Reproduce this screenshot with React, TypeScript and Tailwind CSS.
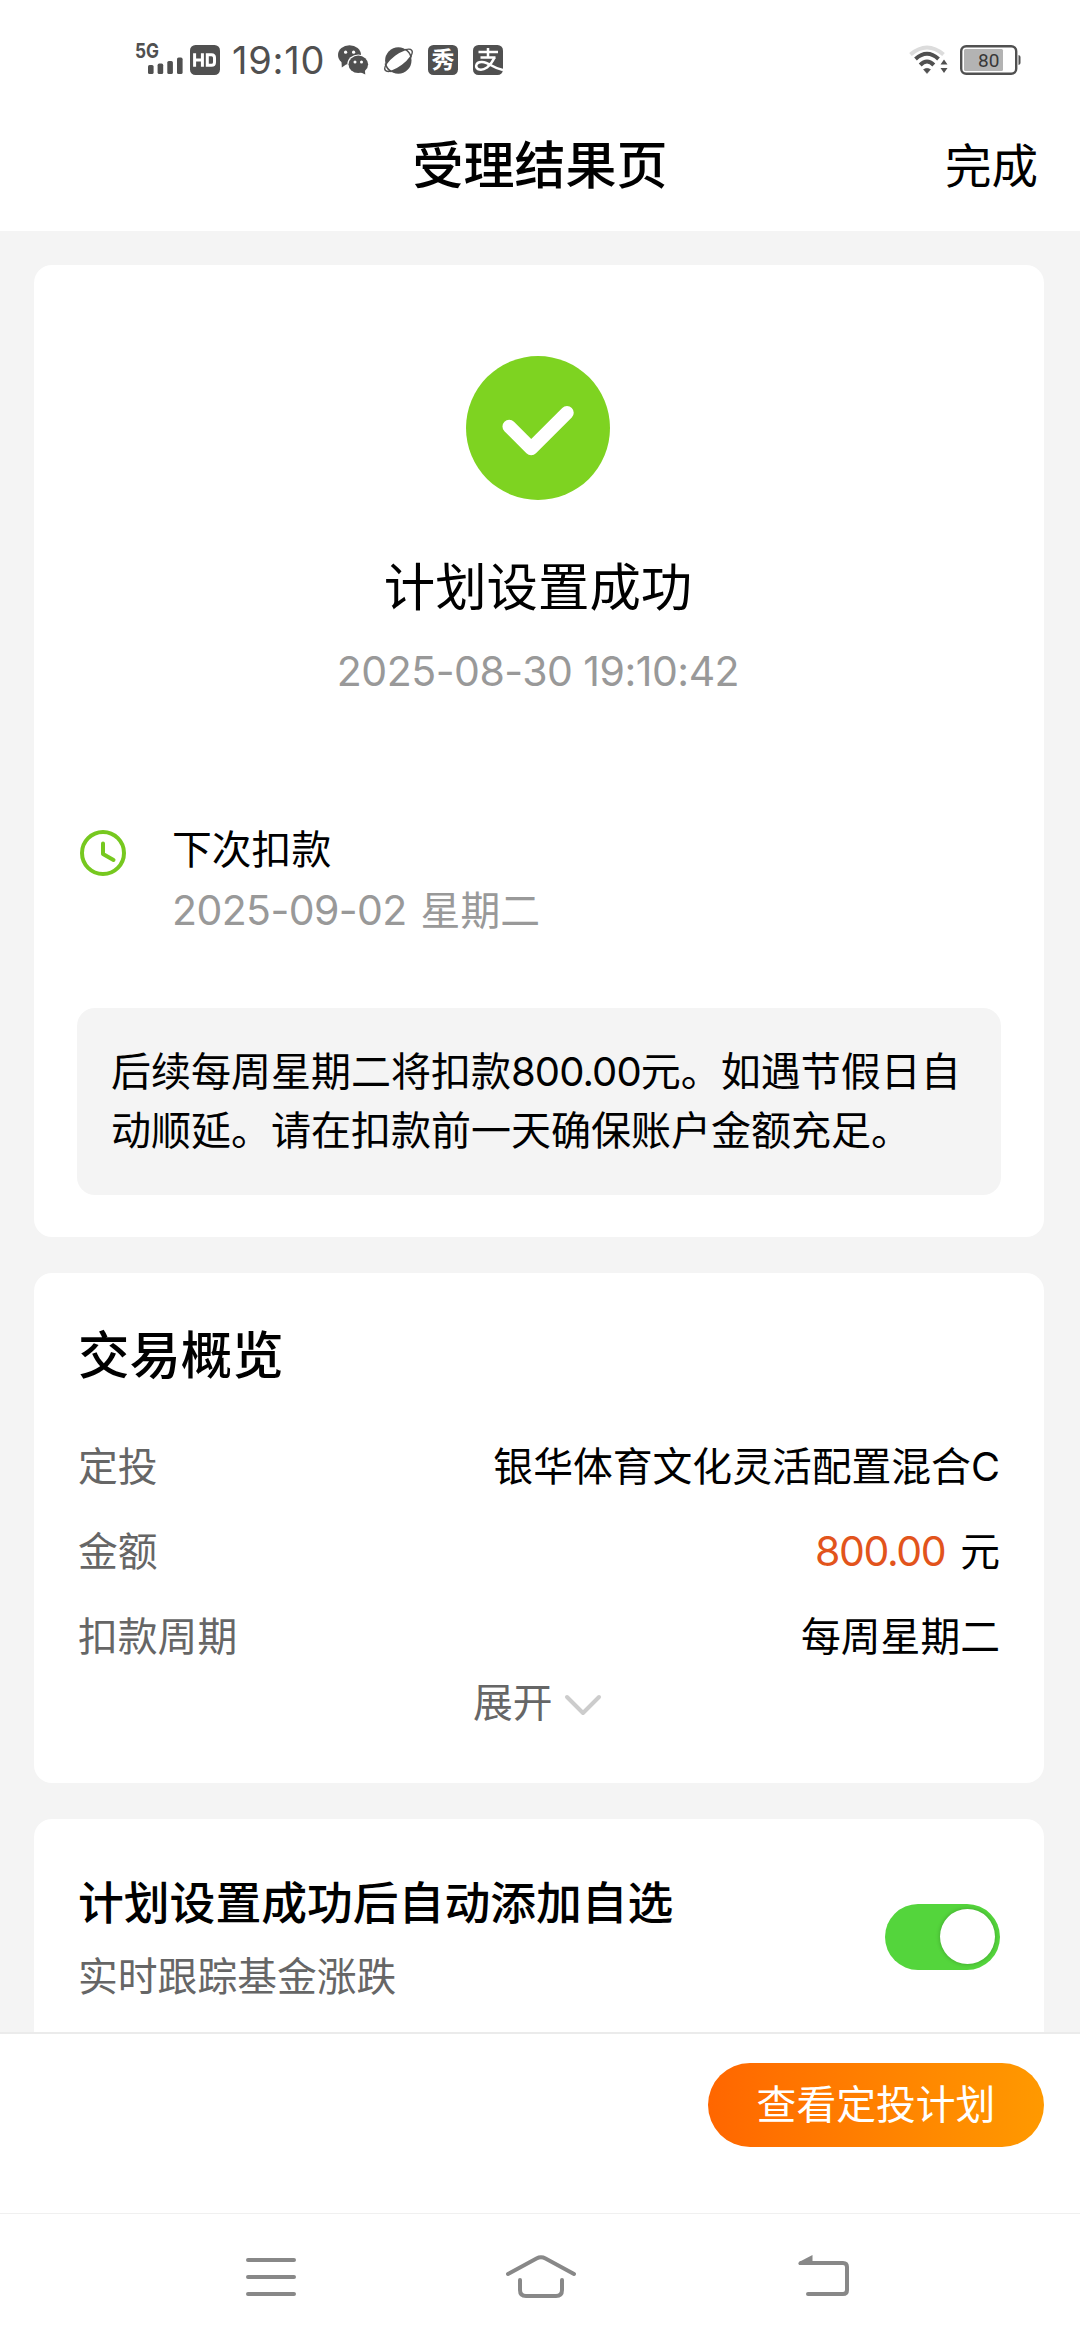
function StatusBar() {
  return (
    <div className="flex h-[120px] items-center pl-[135px] pr-[59px] text-[#505050]">
      <svg className="h-[40px] w-[50px]" viewBox="0 0 50 40" fill="currentColor">
        <text x="0" y="18" fontSize="20" fontWeight="700" fontFamily="Inter, sans-serif" textLength="24" lengthAdjust="spacingAndGlyphs">5G</text>
        <rect x="13" y="25" width="5.6" height="9" rx="1.6" />
        <rect x="22.6" y="23.6" width="5.6" height="10.4" rx="1.6" />
        <rect x="32.3" y="21" width="5.6" height="13" rx="1.6" />
        <rect x="42" y="17.6" width="5.6" height="16.4" rx="1.6" />
      </svg>
      <svg className="ml-[5px] h-[30px] w-[30px]" viewBox="0 0 30 30">
        <rect width="30" height="30" rx="5.5" fill="#505050" />
        <g fill="none" stroke="#fff" strokeWidth="3">
          <path d="M4.6 8.2v13.6M12.4 8.2v13.6M4.6 15h7.8" />
          <path d="M17.3 9.7h4.2q3 0 3 3v4.600q0 3-3 3h-4.200z" />
        </g>
      </svg>
      <span className="ml-[12px] w-[93px] whitespace-nowrap text-[38px] leading-[40px] tracking-[0.8px]">19:10</span>
      <svg className="ml-[13px] h-[30px] w-[31px]" viewBox="0 0 31 30">
        <ellipse cx="11.500" cy="10" rx="11.500" ry="9.800" fill="currentColor" />
        <path d="M3.500 16L3.800 22.500L9.500 18.500z" fill="currentColor" />
        <circle cx="7.600" cy="7.200" r="1.600" fill="#fff" />
        <circle cx="15.600" cy="7.200" r="1.600" fill="#fff" />
        <ellipse cx="20.300" cy="19.300" rx="11" ry="9.900" fill="#fff" />
        <ellipse cx="20.300" cy="19.300" rx="9.800" ry="8.700" fill="currentColor" />
        <path d="M22 27L27.300 29.600L26.800 24.500z" fill="currentColor" />
        <circle cx="17" cy="17" r="1.500" fill="#fff" />
        <circle cx="23.500" cy="17" r="1.500" fill="#fff" />
      </svg>
      <svg className="ml-[14px] h-[30px] w-[31px]" viewBox="0 0 31 30">
        <ellipse cx="15.500" cy="15.300" rx="17.300" ry="7" transform="rotate(-37 15.500 15.300)" fill="#505050" />
        <circle cx="15.300" cy="15.500" r="13.200" fill="#505050" />
        <ellipse cx="15.500" cy="15.300" rx="15.800" ry="5.600" transform="rotate(-37 15.500 15.300)" fill="#fff" />
        <path d="M22.300 4.400Q27.200 7.400 28.200 12.500" fill="none" stroke="#505050" strokeWidth="1.600" />
        <path d="M2.300 18.500Q3.800 24 8.500 26.800" fill="none" stroke="#505050" strokeWidth="1.600" />
      </svg>
      <span className="ml-[14px] flex size-[30px] items-center justify-center rounded-[5.500px] bg-[#505050] text-[23px] font-bold leading-[30px] text-white">秀</span>
      <svg className="ml-[15px] size-[30px]" viewBox="0 0 30 30">
        <rect width="30" height="30" rx="5.500" fill="#505050" />
        <g fill="none" stroke="#fff" strokeWidth="2.500" strokeLinecap="butt">
          <path d="M5.500 7H25M15 3V12.500M7.500 12.500H22.500" />
          <path d="M21.500 12.500Q18.500 19 14 22.500Q10 25.300 6.500 24.600Q2.800 23.500 3.200 20.500Q4 16.800 9 17Q13 17.200 18.500 20.500Q24 23.800 30 25" />
        </g>
      </svg>

      <svg className="ml-auto h-[32px] w-[40px]" viewBox="0 0 40 32" fill="none" stroke="currentColor">
        <path d="M1.500 10.500Q18 -3.500 34.500 10.500" stroke="#dcdcdc" strokeWidth="4" />
        <path d="M6.500 15Q18 4.500 29.500 15" strokeWidth="4" />
        <path d="M11.200 21Q18 14 24.800 21" strokeWidth="4" />
        <path d="M14.500 25.500Q18 23 21.500 25.500L18 29.500z" fill="currentColor" strokeWidth="0.500" />
        <path d="M31.500 20.500L35 15.500L38.500 20.500zM31.500 24L35 29L38.500 24z" fill="currentColor" stroke="none" />
      </svg>
      <svg className="ml-[11px] h-[30px] w-[61px]" viewBox="0 0 61 30">
        <rect x="1.200" y="1.200" width="55" height="27.600" rx="5" fill="none" stroke="#505050" strokeWidth="2.400" />
        <rect x="4" y="4" width="39" height="22" rx="1.500" fill="#b3b3b3" />
        <path d="M58.500 10q2 .5 2 2v6q0 1.500-2 2z" fill="#505050" />
        <text x="18" y="22" fontSize="19" fontFamily="Roboto, sans-serif" fill="#383838" textLength="21.500">80</text>
      </svg>
    </div>
  );
}

function Row({ label, children }: { label: string; children: React.ReactNode }) {
  return (
    <div className="flex h-[85px] items-center justify-between leading-[60px]">
      <span className="text-[#666]">{label}</span>
      <span className="text-black">{children}</span>
    </div>
  );
}

export default function App() {
  return (
    <div className="flex h-[2340px] w-[1080px] flex-col overflow-hidden bg-[#f4f4f4] font-['Inter','Noto_Sans_CJK_SC',sans-serif] text-[39.8px] text-black">
      <header className="h-[231px] shrink-0 bg-white">
        <StatusBar />
        <div className="grid h-[90px] grid-cols-3 items-center">
          <h1 className="col-start-2 pt-[1px] text-center text-[51px] font-medium leading-[60px]">受理结果页</h1>
          <button className="pr-[42px] pt-[2px] text-right text-[46.500px] leading-[60px]">完成</button>
        </div>
      </header>

      <main className="flex min-h-0 flex-1 flex-col gap-[36px] overflow-hidden pl-[34px] pr-[36px] pt-[34px]">
        <section className="h-[972px] shrink-0 rounded-[18px] bg-white px-[43px] pt-[91px]">
          <div className="flex flex-col items-center pr-[2px]">
            <svg className="size-[144px]" viewBox="0 0 144 144">
              <circle cx="72" cy="72" r="72" fill="#7ed321" />
              <path d="M43.200 70.500L65.200 92.500L101 56.800" fill="none" stroke="#fff" strokeWidth="13.500" strokeLinecap="round" strokeLinejoin="round" />
            </svg>
            <h2 className="mt-[57px] text-[51.400px] leading-[60px]">计划设置成功</h2>
            <p className="mt-[29px] text-[41px] leading-[50px] tracking-[-0.500px] text-[#999]">2025-08-30 19:10:42</p>
          </div>

          <div className="mt-[124px] flex items-start pl-[3px]">
            <svg className="mt-[10px] size-[46px]" viewBox="0 0 46 46" fill="none" stroke="#76c81f" strokeWidth="4" strokeLinecap="round" strokeLinejoin="round">
              <circle cx="23" cy="23" r="21" />
              <path d="M23 13.500V24L33.500 30" />
            </svg>
            <div className="ml-[46px] leading-[60px]">
              <p>下次扣款</p>
              <p className="text-[#999]"><span className="mr-[3px] text-[41px] tracking-[-0.600px]">2025-09-02 </span>星期二</p>
            </div>
          </div>

          <p className="mt-[67px] h-[187px] whitespace-nowrap rounded-[18px] bg-[#f4f4f4] pl-[34px] pt-[34px] text-[40px] leading-[59px]">
            后续每周星期二将扣款<span className="tracking-[-0.900px]">800.00</span>元。如遇节假日自<br />
            动顺延。请在扣款前一天确保账户金额充足。
          </p>
        </section>

        <section className="h-[510px] shrink-0 rounded-[18px] bg-white px-[44px] pt-[52px]">
          <h3 className="text-[51.400px] font-medium leading-[60px]">交易概览</h3>
          <div className="mt-[39px]">
            <Row label="定投">银华体育文化灵活配置混合C</Row>
            <Row label="金额">
              <span className="mr-[15px] text-[41px] tracking-[-1.400px] text-[#e2541c]">800.00</span>元
            </Row>
            <Row label="扣款周期">每周星期二</Row>
          </div>
          <button className="ml-[395px] flex items-center leading-[48px] text-[#666]">
            展开
            <svg className="ml-[11px] mt-[3px] h-[24px] w-[38px]" viewBox="0 0 38 24" fill="none" stroke="#ccc" strokeWidth="4" strokeLinecap="round" strokeLinejoin="round">
              <path d="M3 4L19 20L35 4" />
            </svg>
          </button>
        </section>

        <section className="flex h-[240px] shrink-0 items-start justify-between rounded-t-[18px] bg-white px-[44px] pt-[54px]">
          <div className="pt-[1px] leading-[60px]">
            <h3 className="text-[45.800px] font-medium">计划设置成功后自动添加自选</h3>
            <p className="mt-[13px] text-[#666]">实时跟踪基金涨跌</p>
          </div>
          <button className="mt-[31px] flex h-[66px] w-[115px] items-center justify-end rounded-full bg-[#54d53c] pb-[1px] pr-[5px]">
            <span className="size-[55px] rounded-full bg-white shadow-[0_0_4px_rgba(0,0,0,0.25)]" />
          </button>
        </section>
      </main>

      <footer className="h-[181px] shrink-0 border-t-2 border-[#ebebeb] bg-white pl-[708px] pt-[29px]">
        <button className="h-[84px] w-[336px] rounded-full bg-linear-to-r from-[#ff6600] to-[#ff9900] text-center leading-[82px] text-white">查看定投计划</button>
      </footer>

      <nav className="h-[127px] shrink-0 border-t border-[#f0f0f0] bg-white">
        <div className="flex items-start pl-[246px] pt-[40px]">
          <svg className="h-[44px] w-[50px]" viewBox="0 0 50 44" fill="none" stroke="#888" strokeWidth="4" strokeLinecap="round">
            <path d="M2 6H48M2 23H48M2 40H48" />
          </svg>
          <svg className="ml-[209px] h-[46px] w-[72px]" viewBox="0 0 72 46" fill="none" stroke="#888" strokeWidth="4" strokeLinecap="round" strokeLinejoin="round">
            <path d="M3 20L31.500 4.400Q36 2 40.500 4.400L69 20" />
            <path d="M15 26V36Q15 42 21 42H51Q57 42 57 36V26" />
          </svg>
          <svg className="ml-[220px] h-[46px] w-[54px]" viewBox="0 0 54 46" fill="none" stroke="#888" strokeWidth="4" strokeLinecap="round" strokeLinejoin="round">
            <path d="M4 9H46Q50 9 50 13V36Q50 40 46 40H11" />
            <path d="M15.500 1V11H2Q.5 9 2 8z" fill="#888" stroke="none" />
          </svg>
        </div>
      </nav>
    </div>
  );
}
